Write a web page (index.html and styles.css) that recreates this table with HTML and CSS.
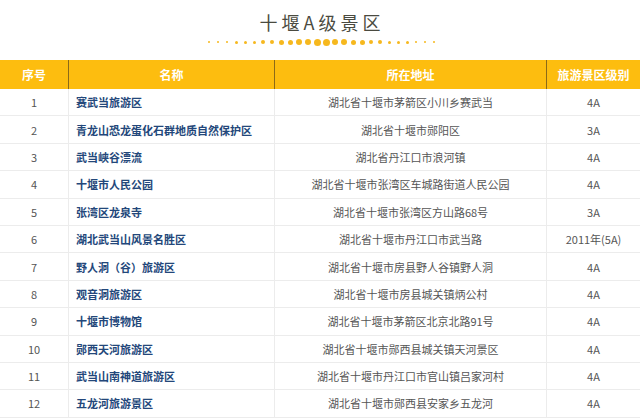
FILE: index.html
```html
<!DOCTYPE html>
<html lang="zh">
<head>
<meta charset="utf-8">
<link rel="stylesheet" href="styles.css">
</head>
<body>
<div class="page">
  <div class="title-block">
    <h1 class="title">十堰A级景区</h1>
    <div class="dots">
      <span class="d s1"></span><span class="d s1"></span><span class="d s1"></span><span class="d s2"></span><span class="d s2"></span><span class="d s2"></span><span class="d s3"></span><span class="d s3"></span><span class="d s4"></span><span class="d s4"></span><span class="d s5"></span><span class="d s5"></span><span class="d s6"></span><span class="d s6"></span><span class="d s5"></span><span class="d s5"></span><span class="d s4"></span><span class="d s4"></span><span class="d s3"></span><span class="d s3"></span><span class="d s2"></span><span class="d s2"></span><span class="d s2"></span><span class="d s1"></span><span class="d s1"></span><span class="d s1"></span>
    </div>
  </div>
  <div class="table">
    <div class="row head">
      <div class="c">序号</div>
      <div class="c">名称</div>
      <div class="c">所在地址</div>
      <div class="c">旅游景区级别</div>
    </div>
    <div class="row"><div class="c">1</div><div class="c name">赛武当旅游区</div><div class="c">湖北省十堰市茅箭区小川乡赛武当</div><div class="c">4A</div></div>
    <div class="row"><div class="c">2</div><div class="c name">青龙山恐龙蛋化石群地质自然保护区</div><div class="c">湖北省十堰市郧阳区</div><div class="c">3A</div></div>
    <div class="row"><div class="c">3</div><div class="c name">武当峡谷漂流</div><div class="c">湖北省丹江口市浪河镇</div><div class="c">4A</div></div>
    <div class="row"><div class="c">4</div><div class="c name">十堰市人民公园</div><div class="c">湖北省十堰市张湾区车城路街道人民公园</div><div class="c">4A</div></div>
    <div class="row"><div class="c">5</div><div class="c name">张湾区龙泉寺</div><div class="c">湖北省十堰市张湾区方山路68号</div><div class="c">3A</div></div>
    <div class="row"><div class="c">6</div><div class="c name">湖北武当山风景名胜区</div><div class="c">湖北省十堰市丹江口市武当路</div><div class="c">2011年(5A)</div></div>
    <div class="row"><div class="c">7</div><div class="c name">野人洞（谷）旅游区</div><div class="c">湖北省十堰市房县野人谷镇野人洞</div><div class="c">4A</div></div>
    <div class="row"><div class="c">8</div><div class="c name">观音洞旅游区</div><div class="c">湖北省十堰市房县城关镇炳公村</div><div class="c">4A</div></div>
    <div class="row"><div class="c">9</div><div class="c name">十堰市博物馆</div><div class="c">湖北省十堰市茅箭区北京北路91号</div><div class="c">4A</div></div>
    <div class="row"><div class="c">10</div><div class="c name">郧西天河旅游区</div><div class="c">湖北省十堰市郧西县城关镇天河景区</div><div class="c">4A</div></div>
    <div class="row"><div class="c">11</div><div class="c name">武当山南神道旅游区</div><div class="c">湖北省十堰市丹江口市官山镇吕家河村</div><div class="c">4A</div></div>
    <div class="row"><div class="c">12</div><div class="c name">五龙河旅游景区</div><div class="c">湖北省十堰市郧西县安家乡五龙河</div><div class="c">4A</div></div>
  </div>
</div>
</body>
</html>
```

FILE: styles.css
```css
* { box-sizing: border-box; }
html, body { margin: 0; padding: 0; background: #ffffff; }
body {
  font-family: "Noto Sans CJK SC", "Noto Sans", sans-serif;
  color: #555555;
  width: 640px;
  height: 418px;
  overflow: hidden;
}
.title-block {
  height: 60px;
  display: flex;
  flex-direction: column;
  align-items: center;
  padding-top: 9px;
}
.title {
  margin: 0;
  font-size: 18px;
  line-height: 26px;
  font-weight: 400;
  letter-spacing: 4px;
  padding-left: 4px;
  color: #4a4a40;
}
.dots {
  display: flex;
  align-items: center;
  height: 8px;
  margin-top: 3px;
  margin-left: 3px;
}
.d {
  width: 9px;
  height: 8px;
  display: flex;
  align-items: center;
  justify-content: center;
}
.d::before {
  content: "";
  display: block;
  border-radius: 50%;
  background: #f6b81e;
}
.s1::before { width: 2px; height: 2px; }
.s2::before { width: 3px; height: 3px; }
.s3::before { width: 4px; height: 4px; }
.s4::before { width: 5px; height: 5px; }
.s5::before { width: 6px; height: 6px; }
.s6::before { width: 7px; height: 7px; }

.table { width: 640px; }
.row {
  display: grid;
  grid-template-columns: 68px 206px 272px 94px;
  height: 27.4px;
  border-bottom: 1px solid #ececec;
}
.c {
  display: flex;
  align-items: center;
  justify-content: center;
  font-size: 11px;
  white-space: nowrap;
  border-left: 1px solid #ececec;
}
.c:first-child { border-left: none; }
.name {
  justify-content: flex-start;
  padding-left: 7px;
  color: #23477a;
  font-weight: 700;
}
.head {
  height: 29px;
  background: #fdbd0f;
  border-bottom: none;
}
.head .c {
  color: #ffffff;
  font-weight: 700;
  font-size: 12px;
  border-left: 1px solid #8c6a18;
}
.head .c:first-child { border-left: none; }
```
